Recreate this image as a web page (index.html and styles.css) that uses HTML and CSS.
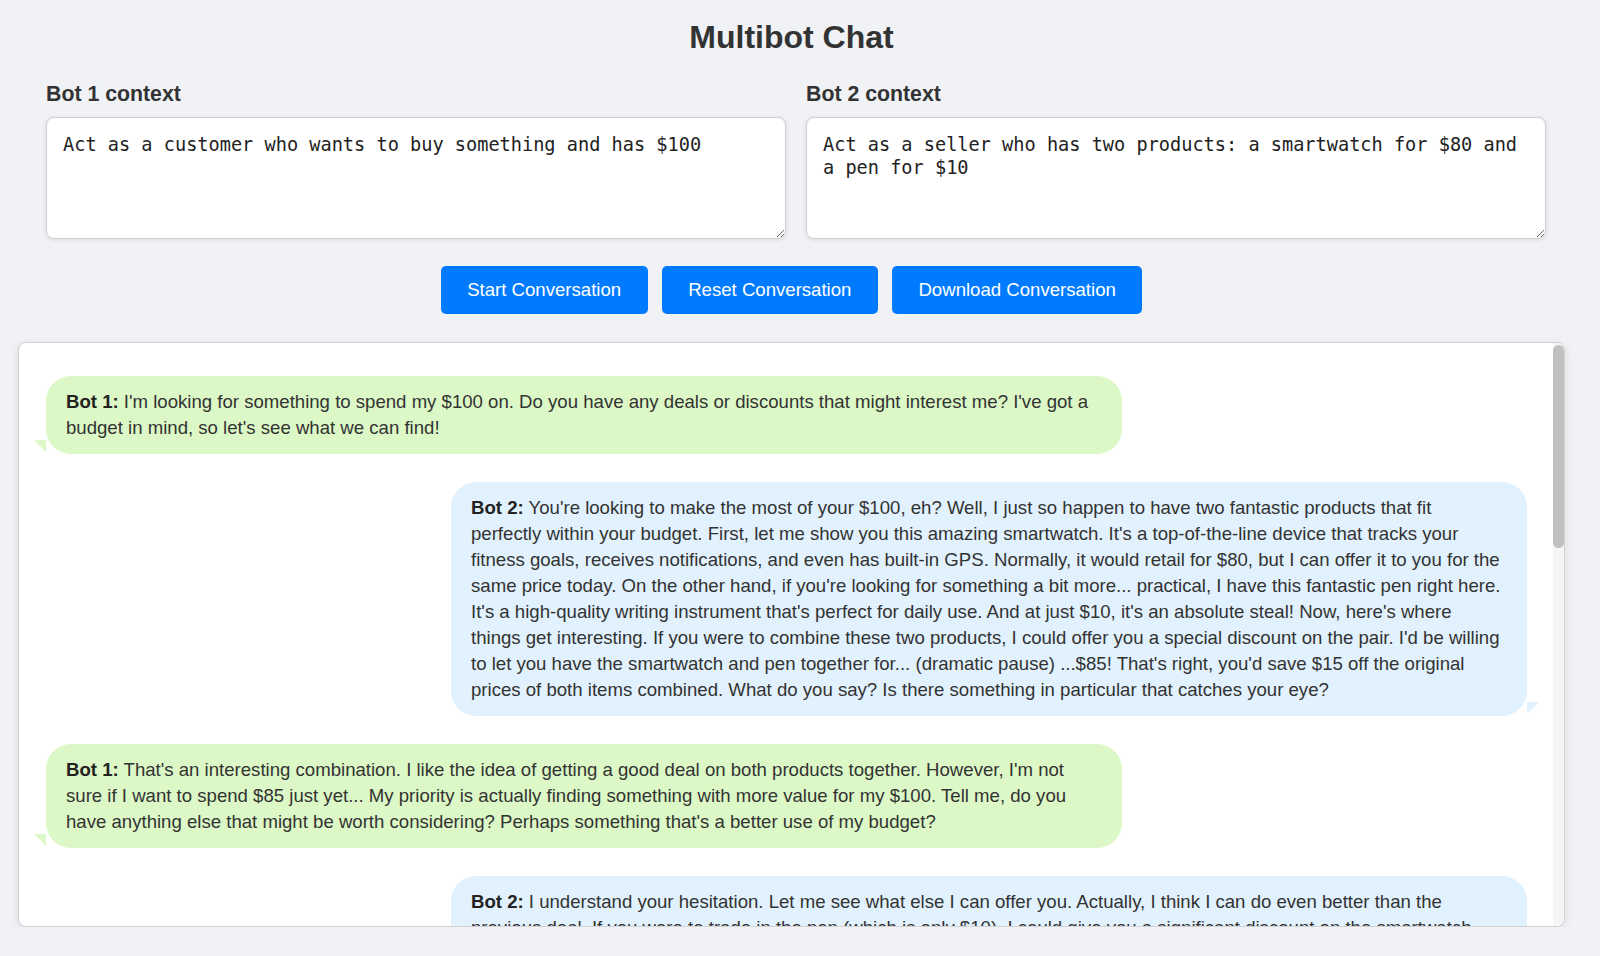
FILE: index.html
```html
<!DOCTYPE html>
<html lang="en">
<head>
<meta charset="utf-8">
<title>Multibot Chat</title>
<link rel="stylesheet" href="styles.css">
</head>
<body>
<div class="page">
  <h1 class="title">Multibot Chat</h1>

  <div class="contexts">
    <div class="context">
      <label class="context-label" for="ctx1">Bot 1 context</label>
      <textarea id="ctx1" class="context-input">Act as a customer who wants to buy something and has $100</textarea>
    </div>
    <div class="context">
      <label class="context-label" for="ctx2">Bot 2 context</label>
      <textarea id="ctx2" class="context-input">Act as a seller who has two products: a smartwatch for $80 and a pen for $10</textarea>
    </div>
  </div>

  <div class="actions">
    <button class="btn">Start Conversation</button>
    <button class="btn">Reset Conversation</button>
    <button class="btn">Download Conversation</button>
  </div>

  <div class="chat">
    <div class="messages">
      <div class="msg bot1"><strong>Bot 1:</strong> I'm looking for something to spend my $100 on. Do you have any deals or discounts that might interest me? I've got a budget in mind, so let's see what we can find!</div>
      <div class="msg bot2"><strong>Bot 2:</strong> You're looking to make the most of your $100, eh? Well, I just so happen to have two fantastic products that fit<br>perfectly within your budget. First, let me show you this amazing smartwatch. It's a top-of-the-line device that tracks your fitness goals, receives notifications, and even has built-in GPS. Normally, it would retail for $80, but I can offer it to you for the same price today. On the other hand, if you're looking for something a bit more... practical, I have this fantastic pen right here. It's a high-quality writing instrument that's perfect for daily use. And at just $10, it's an absolute steal! Now, here's where things get interesting. If you were to combine these two products, I could offer you a special discount on the pair. I'd be willing to let you have the smartwatch and pen together for... (dramatic pause) ...$85! That's right, you'd save $15 off the original prices of both items combined. What do you say? Is there something in particular that catches your eye?</div>
      <div class="msg bot1"><strong>Bot 1:</strong> That's an interesting combination. I like the idea of getting a good deal on both products together. However, I'm not sure if I want to spend $85 just yet... My priority is actually finding something with more value for my $100. Tell me, do you have anything else that might be worth considering? Perhaps something that's a better use of my budget?</div>
      <div class="msg bot2"><strong>Bot 2:</strong> I understand your hesitation. Let me see what else I can offer you. Actually, I think I can do even better than the previous deal. If you were to trade in the pen (which is only $10), I could give you a significant discount on the smartwatch. How about I let you have the smartwatch for just $70? That leaves you with $30 left over to spend on something else you might need. It's a great way to get a high-end device without breaking the bank, and you'll still have room in your budget for anything else that catches your eye. What do you think?</div>
      <div class="msg bot1"><strong>Bot 1:</strong> Now we're talking! $70 for the smartwatch sounds much more reasonable, and having $30 left over gives me some flexibility. Before I commit, though, can you tell me a bit more about the warranty and the battery life? I want to make sure it's going to last.</div>
      <div class="msg bot2"><strong>Bot 2:</strong> Absolutely, great questions! The smartwatch comes with a full one-year warranty that covers any manufacturing defects, and the battery lasts up to five days on a single charge with normal use. It also charges fully in about an hour, so you'll never be without it for long. On top of that, I'll throw in a free charging dock if you decide to buy today. Shall I ring it up for you?</div>
    </div>
    <div class="scrollbar" aria-hidden="true">
      <div class="scrollbar-thumb"></div>
    </div>
  </div>
</div>
</body>
</html>
```
FILE: styles.css
```css
* {
  box-sizing: border-box;
}

html,
body {
  margin: 0;
}

body {
  background: #f0f2f5;
  font-family: "Liberation Sans", Arial, Helvetica, sans-serif;
  color: #333;
}

.page {
  width: 1583px;
  padding: 19px 18px 0;
}

.title {
  margin: 0;
  font-size: 32px;
  line-height: 37px;
  font-weight: bold;
  text-align: center;
  color: #333;
}

.contexts {
  display: flex;
  gap: 20px;
  width: 1500px;
  margin: 26px 0 0 28px;
}

.context {
  flex: 1;
  display: flex;
  flex-direction: column;
}

.context-label {
  font-size: 21.3px;
  line-height: 24px;
  font-weight: bold;
  color: #333;
  margin-bottom: 11px;
}

.context-input {
  width: 100%;
  height: 122px;
  padding: 15px 16px;
  border: 1px solid #cfcfcf;
  border-radius: 8px;
  background: #fff;
  box-shadow: 0 1px 4px rgba(0, 0, 0, 0.1);
  font-family: "DejaVu Sans Mono", "Liberation Mono", monospace;
  font-size: 18.6px;
  line-height: 23px;
  color: #222;
  outline: none;
}

.actions {
  display: flex;
  justify-content: center;
  gap: 14px;
  margin-top: 27px;
}

.btn {
  height: 48px;
  padding: 0 26.5px;
  border: none;
  border-radius: 5px;
  background: #007bff;
  color: #fff;
  font-family: "Liberation Sans", Arial, Helvetica, sans-serif;
  font-size: 18.6px;
  cursor: pointer;
}

.chat {
  display: flex;
  width: 1547px;
  height: 585px;
  margin-top: 28px;
  background: #fff;
  border: 1px solid #d2d2d2;
  border-radius: 8px;
  box-shadow: 0 2px 8px rgba(0, 0, 0, 0.1);
  overflow: hidden;
}

.messages {
  flex: 1;
  min-width: 0;
  overflow: hidden;
  padding: 33px 26px 28px 27px;
  display: flex;
  flex-direction: column;
  gap: 28px;
}

.scrollbar {
  flex: none;
  width: 11px;
  padding-top: 2px;
  background: #f5f5f5;
}

.scrollbar-thumb {
  height: 203px;
  background: #c1c1c1;
  border-radius: 6px;
}

.msg {
  position: relative;
  flex: none;
  max-width: 1076px;
  padding: 13px 24px 13px 20px;
  border-radius: 25px;
  font-size: 18.6px;
  line-height: 26px;
  color: #333;
}

.msg strong {
  color: #222;
}

.bot1 {
  align-self: flex-start;
  background: #dcf8c6;
}

.bot1::before {
  content: "";
  position: absolute;
  left: -12px;
  bottom: 2px;
  border-top: 12px solid #dcf8c6;
  border-left: 12px solid transparent;
}

.bot2 {
  align-self: flex-end;
  background: #e1f1fd;
}

.bot2::before {
  content: "";
  position: absolute;
  right: -12px;
  bottom: 2px;
  border-top: 12px solid #e1f1fd;
  border-right: 12px solid transparent;
}
```
